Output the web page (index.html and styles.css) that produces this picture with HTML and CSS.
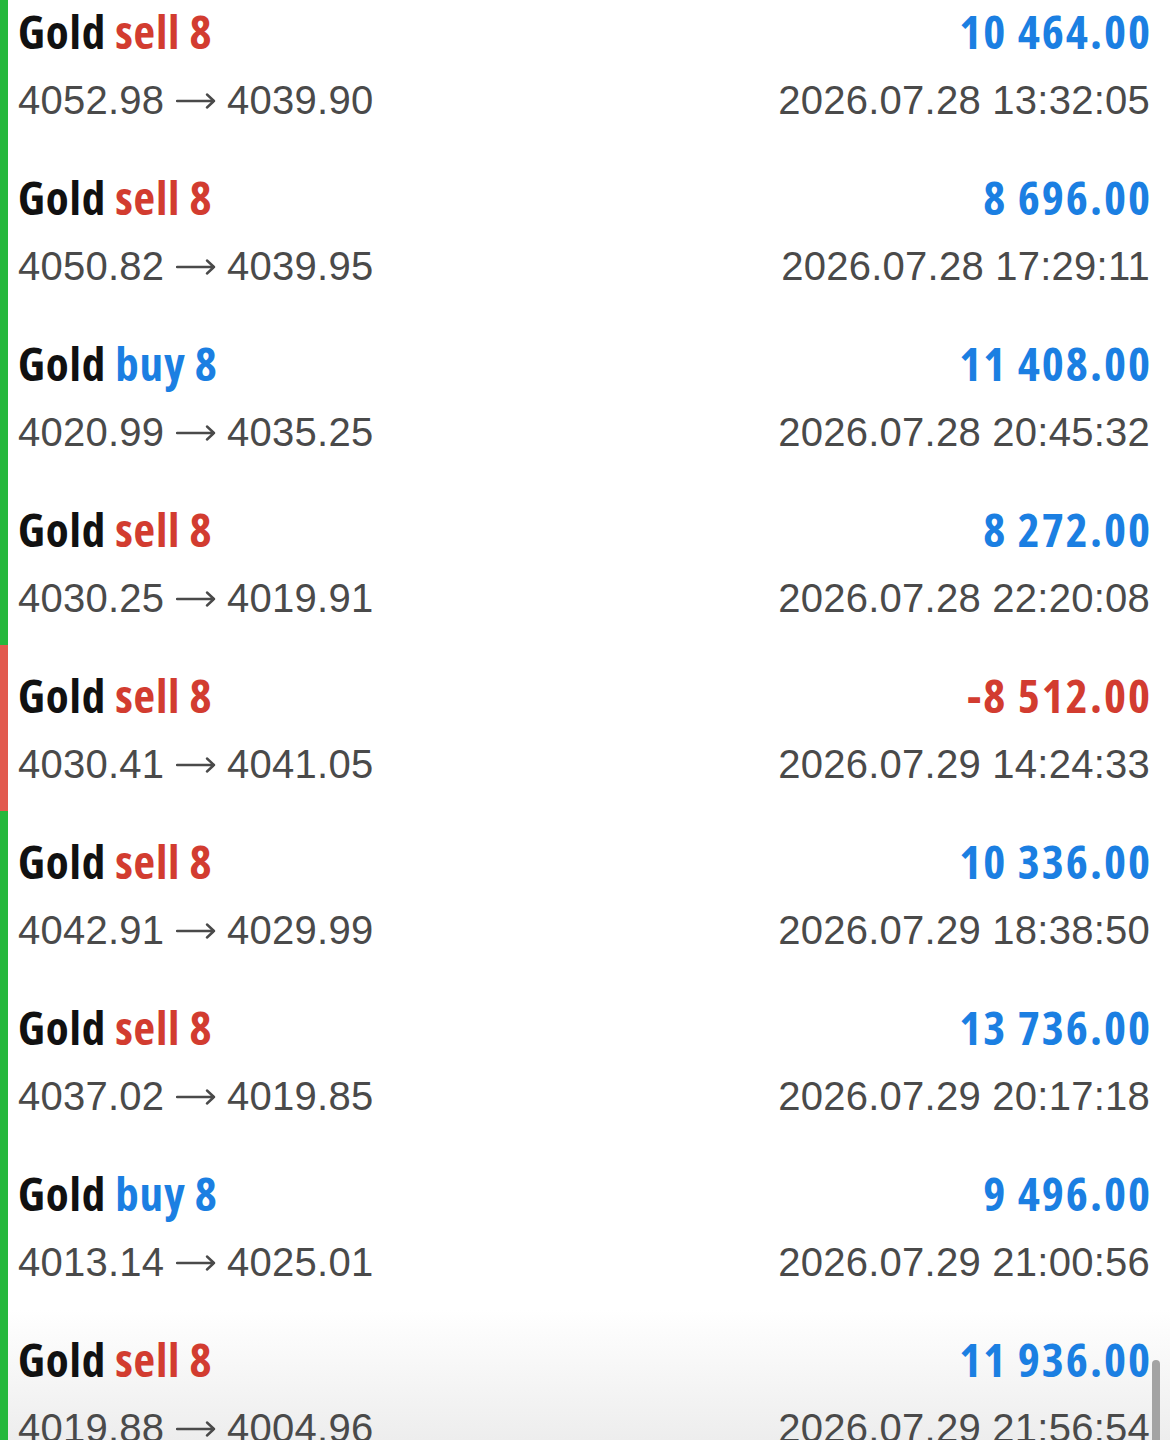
FILE: index.html
```html
<!DOCTYPE html>
<html lang="en">
<head>
    <meta charset="UTF-8">
    <meta name="viewport" content="width=device-width, initial-scale=1.0">
    <title>History</title>
    <link rel="stylesheet" href="styles.css">
</head>
<body>
    <div class="deals">
        <div class="deal win">
            <div class="line">
                <span class="title">Gold <span class="sell">sell 8</span></span>
                <span class="profit">10 464.00</span>
            </div>
            <div class="line meta">
                <span>4052.98 <svg class="arrow" viewBox="0 0 40 16"><path d="M1 8H38M31 1.5L38 8L31 14.5"/></svg> 4039.90</span>
                <span>2026.07.28 13:32:05</span>
            </div>
        </div>
        <div class="deal win">
            <div class="line">
                <span class="title">Gold <span class="sell">sell 8</span></span>
                <span class="profit">8 696.00</span>
            </div>
            <div class="line meta">
                <span>4050.82 <svg class="arrow" viewBox="0 0 40 16"><path d="M1 8H38M31 1.5L38 8L31 14.5"/></svg> 4039.95</span>
                <span>2026.07.28 17:29:11</span>
            </div>
        </div>
        <div class="deal win">
            <div class="line">
                <span class="title">Gold <span class="buy">buy 8</span></span>
                <span class="profit">11 408.00</span>
            </div>
            <div class="line meta">
                <span>4020.99 <svg class="arrow" viewBox="0 0 40 16"><path d="M1 8H38M31 1.5L38 8L31 14.5"/></svg> 4035.25</span>
                <span>2026.07.28 20:45:32</span>
            </div>
        </div>
        <div class="deal win">
            <div class="line">
                <span class="title">Gold <span class="sell">sell 8</span></span>
                <span class="profit">8 272.00</span>
            </div>
            <div class="line meta">
                <span>4030.25 <svg class="arrow" viewBox="0 0 40 16"><path d="M1 8H38M31 1.5L38 8L31 14.5"/></svg> 4019.91</span>
                <span>2026.07.28 22:20:08</span>
            </div>
        </div>
        <div class="deal loss">
            <div class="line">
                <span class="title">Gold <span class="sell">sell 8</span></span>
                <span class="profit">-8 512.00</span>
            </div>
            <div class="line meta">
                <span>4030.41 <svg class="arrow" viewBox="0 0 40 16"><path d="M1 8H38M31 1.5L38 8L31 14.5"/></svg> 4041.05</span>
                <span>2026.07.29 14:24:33</span>
            </div>
        </div>
        <div class="deal win">
            <div class="line">
                <span class="title">Gold <span class="sell">sell 8</span></span>
                <span class="profit">10 336.00</span>
            </div>
            <div class="line meta">
                <span>4042.91 <svg class="arrow" viewBox="0 0 40 16"><path d="M1 8H38M31 1.5L38 8L31 14.5"/></svg> 4029.99</span>
                <span>2026.07.29 18:38:50</span>
            </div>
        </div>
        <div class="deal win">
            <div class="line">
                <span class="title">Gold <span class="sell">sell 8</span></span>
                <span class="profit">13 736.00</span>
            </div>
            <div class="line meta">
                <span>4037.02 <svg class="arrow" viewBox="0 0 40 16"><path d="M1 8H38M31 1.5L38 8L31 14.5"/></svg> 4019.85</span>
                <span>2026.07.29 20:17:18</span>
            </div>
        </div>
        <div class="deal win">
            <div class="line">
                <span class="title">Gold <span class="buy">buy 8</span></span>
                <span class="profit">9 496.00</span>
            </div>
            <div class="line meta">
                <span>4013.14 <svg class="arrow" viewBox="0 0 40 16"><path d="M1 8H38M31 1.5L38 8L31 14.5"/></svg> 4025.01</span>
                <span>2026.07.29 21:00:56</span>
            </div>
        </div>
        <div class="deal win">
            <div class="line">
                <span class="title">Gold <span class="sell">sell 8</span></span>
                <span class="profit">11 936.00</span>
            </div>
            <div class="line meta">
                <span>4019.88 <svg class="arrow" viewBox="0 0 40 16"><path d="M1 8H38M31 1.5L38 8L31 14.5"/></svg> 4004.96</span>
                <span>2026.07.29 21:56:54</span>
            </div>
        </div>
    </div>

    <div class="scrollbar"></div>
</body>
</html>
```

FILE: styles.css
```css
body {
    margin: 0;
    padding: 0;
    height: 1440px;
    overflow: hidden;
    font-family: "Liberation Sans", Arial, sans-serif;
    background: linear-gradient(to bottom, #fff 1310px, #ededed 1440px);
}

.deals {
    margin-top: -19px;
}

.deal {
    height: 166px;
    box-sizing: border-box;
    padding: 24px 20px 0 10px;
    border-left: 8px solid #25b83c;
}

.deal.loss {
    border-left-color: #e25a4e;
}

.line {
    display: flex;
    justify-content: space-between;
    align-items: baseline;
}

.title,
.profit {
    font-family: "Open Sans", sans-serif;
    font-stretch: 75%;
    font-weight: bold;
    font-size: 47px;
    line-height: 52px;
}

.title {
    letter-spacing: 0.8px;
    color: #111;
}

.sell {
    color: #d23c30;
}

.buy {
    color: #1b7fe2;
}

.profit {
    letter-spacing: 2px;
    margin-right: -2px;
    color: #1b7fe2;
}

.loss .profit {
    color: #d23c30;
}

.meta {
    margin-top: 15px;
    font-size: 40px;
    line-height: 56px;
    letter-spacing: 0.25px;
    color: #4a4a4a;
}

.arrow {
    width: 40px;
    height: 16px;
    vertical-align: 5px;
    fill: none;
    stroke: #4a4a4a;
    stroke-width: 2.4;
    stroke-linecap: round;
    stroke-linejoin: round;
}

.scrollbar {
    position: fixed;
    top: 1360px;
    right: 10px;
    width: 8px;
    height: 90px;
    border-radius: 4px;
    background-color: #a3a3a3;
}
```
